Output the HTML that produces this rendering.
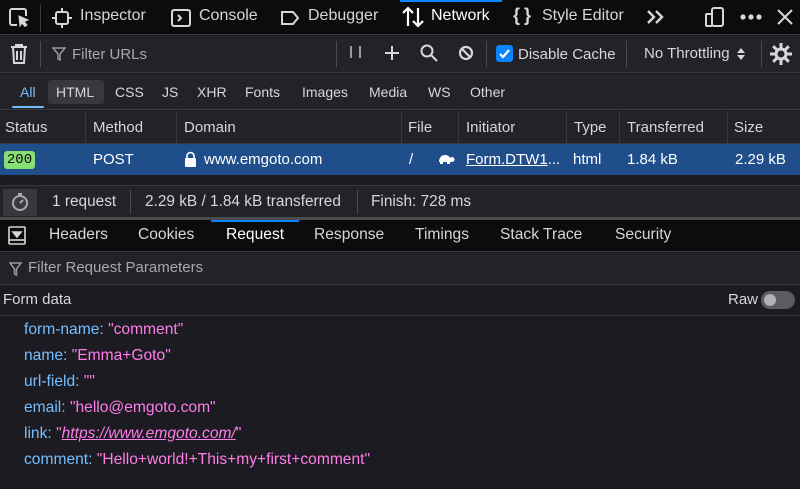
<!DOCTYPE html>
<html><head><meta charset="utf-8"><style>
*{margin:0;padding:0;box-sizing:border-box}
body{width:800px;height:489px;background:#1c1b22;font-family:"Liberation Sans",sans-serif;color:#d7d7db;font-size:15px;overflow:hidden;position:relative}
.a{position:absolute;white-space:nowrap}
svg{position:absolute}
.t{font-size:16px;top:7px}
</style></head><body>
<!-- toolbar -->
<div class="a" style="left:0;top:0;width:800px;height:35px;background:#0c0c0d;border-bottom:1px solid #38383d"></div>
<div class="a" style="left:400px;top:0;width:102px;height:2px;background:#0a84ff"></div>
<svg style="left:8px;top:7px" width="22" height="22" viewBox="0 0 22 22" fill="none" stroke="#d7d7db" stroke-width="2"><path d="M9 18H4a2 2 0 0 1-2-2V4a2 2 0 0 1 2-2h12a2 2 0 0 1 2 2v5"/><path d="M11 9l9 4-4 1.5 3 3.5-2 1.5-3-3.5-2 3z" fill="#d7d7db" stroke-width="1"/></svg>
<div class="a" style="left:40px;top:4px;width:1px;height:28px;background:#38383d"></div>
<svg style="left:51px;top:7px" width="22" height="22" viewBox="0 0 22 22" fill="none" stroke="#d7d7db" stroke-width="2"><rect x="5" y="5" width="12" height="12" rx="2"/><path d="M11 1v4M11 17v4M1 11h4M17 11h4"/></svg>
<div class="a t" style="left:80px">Inspector</div>
<svg style="left:170px;top:7px" width="22" height="22" viewBox="0 0 22 22" fill="none" stroke="#d7d7db" stroke-width="2"><rect x="2" y="3" width="18" height="16" rx="2"/><path d="M8 8l3 3-3 3"/></svg>
<div class="a t" style="left:199px">Console</div>
<svg style="left:279px;top:7px" width="22" height="22" viewBox="0 0 22 22" fill="none" stroke="#d7d7db" stroke-width="2"><path d="M3 5h11l5 6-5 6H3z"/></svg>
<div class="a t" style="left:308px">Debugger</div>
<svg style="left:401px;top:5px" width="24" height="24" viewBox="0 0 24 24" fill="none" stroke="#fff" stroke-width="2.2"><path d="M7 21V3M2 8l5-5 5 5M17 3v18M12 16l5 5 5-5"/></svg>
<div class="a t" style="left:431px;color:#fff">Network</div>
<div class="a" style="left:513px;top:5px;font-size:18px;font-weight:bold;letter-spacing:4px">{}</div>
<div class="a t" style="left:542px">Style Editor</div>
<svg style="left:646px;top:9px" width="20" height="16" fill="none" stroke="#d7d7db" stroke-width="2.4"><path d="M2 2l6 6-6 6M10 2l6 6-6 6"/></svg>
<svg style="left:704px;top:6px" width="22" height="22" viewBox="0 0 22 22" fill="none" stroke="#d7d7db" stroke-width="2"><rect x="8" y="2" width="11" height="18" rx="2"/><rect x="2" y="8" width="6" height="12" rx="1"/></svg>
<svg style="left:740px;top:14px" width="22" height="6" fill="#d7d7db"><circle cx="3" cy="3" r="2.6"/><circle cx="11" cy="3" r="2.6"/><circle cx="19" cy="3" r="2.6"/></svg>
<svg style="left:776px;top:8px" width="18" height="18" viewBox="0 0 18 18" stroke="#d7d7db" stroke-width="2"><path d="M2 2l14 14M16 2L2 16"/></svg>
<!-- filter bar -->
<div class="a" style="left:0;top:36px;width:800px;height:37px;background:#232327;border-bottom:1px solid #38383d"></div>
<svg style="left:10px;top:43px" width="18" height="22" viewBox="0 0 18 22" fill="none" stroke="#d7d7db" stroke-width="2"><path d="M1 4h16M6 4V2h6v2M3 4l1 16h10l1-16M7 8v9M11 8v9"/></svg>
<div class="a" style="left:40px;top:41px;width:1px;height:26px;background:#4a4a4f"></div>
<svg style="left:52px;top:47px" width="14" height="14" viewBox="0 0 14 14" fill="none" stroke="#999" stroke-width="1.5"><path d="M1 1h12L8 7v6L6 12V7z"/></svg>
<div class="a" style="left:72px;top:46px;color:#a8a8ad">Filter URLs</div>
<div class="a" style="left:336px;top:41px;width:1px;height:26px;background:#4a4a4f"></div>
<div class="a" style="left:350px;top:46px;width:2px;height:12px;background:#999"></div>
<div class="a" style="left:359px;top:46px;width:2px;height:12px;background:#999"></div>
<svg style="left:384px;top:45px" width="16" height="16" stroke="#d7d7db" stroke-width="2"><path d="M8 1v14M1 8h14"/></svg>
<svg style="left:420px;top:44px" width="18" height="18" fill="none" stroke="#d7d7db" stroke-width="2"><circle cx="7" cy="7" r="5.5"/><path d="M11 11l6 6"/></svg>
<svg style="left:458px;top:45px" width="16" height="16" fill="none" stroke="#d7d7db" stroke-width="2.2"><circle cx="8" cy="8" r="6"/><path d="M4 4l8 8"/></svg>
<div class="a" style="left:486px;top:41px;width:1px;height:26px;background:#4a4a4f"></div>
<div class="a" style="left:496px;top:45px;width:17px;height:17px;background:#0a84ff;border-radius:3px"></div>
<svg style="left:498px;top:47px" width="13" height="13" fill="none" stroke="#fff" stroke-width="2.2"><path d="M2 7l3 3 6-7"/></svg>
<div class="a" style="left:518px;top:46px">Disable Cache</div>
<div class="a" style="left:626px;top:41px;width:1px;height:26px;background:#4a4a4f"></div>
<div class="a" style="left:644px;top:45px">No Throttling</div>
<svg style="left:737px;top:48px" width="8" height="12" fill="#d7d7db"><path d="M0 5l4-5 4 5zM0 7h8l-4 5z"/></svg>
<div class="a" style="left:761px;top:41px;width:1px;height:26px;background:#4a4a4f"></div>
<svg style="left:769px;top:42px" width="24" height="24" viewBox="0 0 24 24" fill="none" stroke="#d7d7db"><circle cx="12" cy="12" r="5" stroke-width="3"/><path d="M12 1v5M12 18v5M1 12h5M18 12h5M4.2 4.2l3.5 3.5M16.3 16.3l3.5 3.5M4.2 19.8l3.5-3.5M16.3 7.7l3.5-3.5" stroke-width="3"/></svg>
<!-- type filter -->
<div class="a" style="left:0;top:74px;width:800px;height:36px;background:#232327;border-bottom:1px solid #38383d"></div>
<div class="a" style="left:48px;top:80px;width:56px;height:24px;background:#38383d;border-radius:3px"></div>
<div class="a" style="left:12px;top:106px;width:32px;height:2px;background:#75bfff;border-radius:1px"></div>
<div class="a" style="left:20px;top:84px;font-size:14px;color:#75bfff">All</div>
<div class="a" style="left:56px;top:84px;font-size:14px">HTML</div>
<div class="a" style="left:115px;top:84px;font-size:14px">CSS</div>
<div class="a" style="left:162px;top:84px;font-size:14px">JS</div>
<div class="a" style="left:197px;top:84px;font-size:14px">XHR</div>
<div class="a" style="left:245px;top:84px;font-size:14px">Fonts</div>
<div class="a" style="left:302px;top:84px;font-size:14px">Images</div>
<div class="a" style="left:369px;top:84px;font-size:14px">Media</div>
<div class="a" style="left:428px;top:84px;font-size:14px">WS</div>
<div class="a" style="left:470px;top:84px;font-size:14px">Other</div>
<!-- column headers -->
<div class="a" style="left:0;top:111px;width:800px;height:33px;background:#232327;border-bottom:1px solid #38383d"></div>
<div class="a" style="left:5px;top:119px">Status</div>
<div class="a" style="left:85px;top:111px;width:1px;height:33px;background:#38383d"></div>
<div class="a" style="left:93px;top:119px">Method</div>
<div class="a" style="left:176px;top:111px;width:1px;height:33px;background:#38383d"></div>
<div class="a" style="left:184px;top:119px">Domain</div>
<div class="a" style="left:401px;top:111px;width:1px;height:33px;background:#38383d"></div>
<div class="a" style="left:408px;top:119px">File</div>
<div class="a" style="left:458px;top:111px;width:1px;height:33px;background:#38383d"></div>
<div class="a" style="left:466px;top:119px">Initiator</div>
<div class="a" style="left:566px;top:111px;width:1px;height:33px;background:#38383d"></div>
<div class="a" style="left:574px;top:119px">Type</div>
<div class="a" style="left:619px;top:111px;width:1px;height:33px;background:#38383d"></div>
<div class="a" style="left:627px;top:119px">Transferred</div>
<div class="a" style="left:727px;top:111px;width:1px;height:33px;background:#38383d"></div>
<div class="a" style="left:734px;top:119px">Size</div>
<!-- row -->
<div class="a" style="left:0;top:144px;width:800px;height:31px;background:#204e8a"></div>
<div class="a" style="left:4px;top:151px;width:31px;height:18px;background:#86de74;border-radius:3px;color:#0c0c0d;font-family:'Liberation Mono',monospace;font-size:14px;text-align:center;line-height:18px">200</div>
<div class="a" style="left:93px;top:151px;color:#fff">POST</div>
<svg style="left:184px;top:151px" width="13" height="16" fill="#fff"><path d="M3 7V5a3.5 3.5 0 0 1 7 0v2" fill="none" stroke="#fff" stroke-width="1.6"/><rect x="1" y="7" width="11" height="9" rx="1"/></svg>
<div class="a" style="left:204px;top:151px;color:#fff">www.emgoto.com</div>
<div class="a" style="left:409px;top:151px;color:#fff">/</div>
<svg style="left:437px;top:153px" width="18" height="12" fill="#fff"><path d="M2 9C2 4 5 2 8 2s6 2 6 7z"/><circle cx="15" cy="6.5" r="2.5"/><rect x="3" y="8" width="3" height="3"/><rect x="10" y="8" width="3" height="3"/></svg>
<div class="a" style="left:466px;top:151px;color:#fff"><u>Form.DTW1</u>...</div>
<div class="a" style="left:573px;top:151px;color:#fff">html</div>
<div class="a" style="left:627px;top:151px;color:#fff">1.84 kB</div>
<div class="a" style="left:735px;top:151px;color:#fff">2.29 kB</div>
<!-- status bar -->
<div class="a" style="left:0;top:185px;width:800px;height:33px;background:#232327;border-top:1px solid #38383d"></div>
<div class="a" style="left:3px;top:189px;width:34px;height:27px;background:#38383d;border-radius:2px"></div>
<svg style="left:10px;top:192px" width="20" height="20" fill="none" stroke="#a8a8ad" stroke-width="2"><circle cx="10" cy="11" r="7"/><path d="M10 11l3-3M8 2h4"/></svg>
<div class="a" style="left:52px;top:193px;font-size:15.4px">1 request</div>
<div class="a" style="left:130px;top:190px;width:1px;height:24px;background:#4a4a4f"></div>
<div class="a" style="left:145px;top:193px;font-size:15.4px">2.29 kB / 1.84 kB transferred</div>
<div class="a" style="left:357px;top:190px;width:1px;height:24px;background:#4a4a4f"></div>
<div class="a" style="left:371px;top:193px;font-size:15.4px">Finish: 728 ms</div>
<div class="a" style="left:0;top:217px;width:800px;height:3px;background:#4a4a4f"></div>
<!-- detail tabs -->
<div class="a" style="left:0;top:220px;width:800px;height:32px;background:#0c0c0d;border-bottom:1px solid #38383d"></div>
<div class="a" style="left:211px;top:220px;width:88px;height:2px;background:#0a84ff"></div>
<svg style="left:8px;top:226px" width="18" height="20" fill="none" stroke="#d7d7db" stroke-width="1.6"><rect x="1" y="1" width="16" height="17" rx="1"/><path d="M5 6h8l-4 5z" fill="#d7d7db"/><path d="M1 14h16"/></svg>
<div class="a" style="left:49px;top:226px;font-size:15.6px">Headers</div>
<div class="a" style="left:138px;top:226px;font-size:15.6px">Cookies</div>
<div class="a" style="left:226px;top:226px;font-size:15.6px;color:#fff">Request</div>
<div class="a" style="left:314px;top:226px;font-size:15.6px">Response</div>
<div class="a" style="left:415px;top:226px;font-size:15.6px">Timings</div>
<div class="a" style="left:500px;top:226px;font-size:15.6px">Stack Trace</div>
<div class="a" style="left:615px;top:226px;font-size:15.6px">Security</div>
<!-- filter params -->
<div class="a" style="left:0;top:253px;width:800px;height:32px;background:#232327;border-bottom:1px solid #38383d"></div>
<svg style="left:9px;top:262px" width="13" height="14" fill="none" stroke="#999" stroke-width="1.5"><path d="M1 1h11L7.5 7v6l-2-1V7z"/></svg>
<div class="a" style="left:28px;top:259px;font-size:15px;color:#a8a8ad">Filter Request Parameters</div>
<!-- form data header -->
<div class="a" style="left:0;top:286px;width:800px;height:30px;background:#1c1b22;border-bottom:1px solid #38383d"></div>
<div class="a" style="left:3px;top:291px">Form data</div>
<div class="a" style="left:728px;top:291px">Raw</div>
<div class="a" style="left:761px;top:291px;width:34px;height:18px;background:#5b5b60;border-radius:9px"></div>
<div class="a" style="left:764px;top:294px;width:12px;height:12px;background:#b1b1b3;border-radius:6px"></div>
<!-- form data -->
<div style="position:absolute;left:24px;top:317px;font-size:15.6px;line-height:26px;color:#75bfff">
<div>form-name: <span style="color:#ff7de9">"comment"</span></div>
<div>name: <span style="color:#ff7de9">"Emma+Goto"</span></div>
<div>url-field: <span style="color:#ff7de9">""</span></div>
<div>email: <span style="color:#ff7de9">"hello@emgoto.com"</span></div>
<div>link: <span style="color:#ff7de9">"<i><u>https://www.emgoto.com/</u></i>"</span></div>
<div>comment: <span style="color:#ff7de9">"Hello+world!+This+my+first+comment"</span></div>
</div>
</body></html>
